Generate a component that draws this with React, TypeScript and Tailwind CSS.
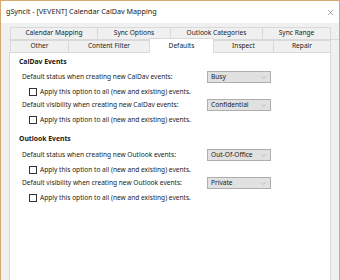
import { ChevronDown, X } from "lucide-react";

const font = { fontFamily: '"Noto Sans", "Open Sans", sans-serif' };

function Tab({ label, width, active }: { label: string; width: string; active?: boolean }) {
  return (
    <div
      className={`-ml-px flex items-center justify-center whitespace-nowrap border border-b-0 border-[#d9d9d9] text-[6.6px] leading-none text-[#1a1a1a] ${width} ${
        active ? "relative z-10 -mb-px -mt-[2px] bg-white" : "bg-[#f0f0f0]"
      }`}
    >
      {label}
    </div>
  );
}

function Select({ value }: { value: string }) {
  return (
    <div className="flex h-[12px] w-[64px] items-center justify-between border border-[#adadad] bg-[#e1e1e1] pl-[3px] pr-[3px] text-[6.6px] leading-none text-[#1a1a1a]">
      <span>{value}</span>
      <ChevronDown size={7} strokeWidth={1.2} className="text-[#777]" />
    </div>
  );
}

function OptionRow({ label, value, mt }: { label: string; value: string; mt: string }) {
  return (
    <>
      <div className={`flex h-[12px] items-center ${mt}`}>
        <span className="w-[197px] whitespace-nowrap pl-[12px] text-[6.6px] leading-none text-[#1a1a1a]">{label}</span>
        <Select value={value} />
      </div>
      <div className="mt-[4px] flex h-[10px] items-center pl-[19px]">
        <span className="h-[8px] w-[8px] border border-[#333] bg-white" />
        <span className="ml-[3px] whitespace-nowrap text-[6.6px] leading-none text-[#1a1a1a]">
          Apply this option to all (new and existing) events.
        </span>
      </div>
    </>
  );
}

export default function App() {
  return (
    <div
      className="flex h-[280px] w-[340px] flex-col overflow-hidden border border-b-0 border-[#d7a86e] bg-[#f0f0f0]"
      style={font}
    >
      <div className="flex h-[22px] shrink-0 items-center justify-between bg-white pl-[5px] pr-[4px]">
        <span className="text-[7.2px] leading-none text-[#1a1a1a]">gSyncit - [VEVENT] Calendar CalDav Mapping</span>
        <X size={9} strokeWidth={1} className="text-[#222]" />
      </div>

      <div className="mt-[4px] flex flex-1 flex-col pl-[8px]">
        <div className="flex h-[12px] pl-[2px]">
          <Tab label="Calendar Mapping" width="w-[88px]" />
          <Tab label="Sync Options" width="w-[74px]" />
          <Tab label="Outlook Categories" width="w-[93px]" />
          <Tab label="Sync Range" width="w-[69px]" />
        </div>
        <div className="flex h-[13px] border-t border-[#d9d9d9] pl-[2px]">
          <Tab label="Other" width="w-[59px]" />
          <Tab label="Content Filter" width="w-[82px]" />
          <Tab label="Defaults" width="w-[65px]" active />
          <Tab label="Inspect" width="w-[61px]" />
          <Tab label="Repair" width="w-[58px]" />
        </div>

        <div className="flex w-[322px] flex-1 flex-col border border-b-0 border-[#d9d9d9] bg-white pt-[4px]">
          <div className="flex h-[10px] items-center pl-[9px] text-[6.8px] font-bold leading-none text-[#1a1a1a]">
            CalDav Events
          </div>
          <OptionRow label="Default status when creating new CalDav events:" value="Busy" mt="mt-[4px]" />
          <OptionRow label="Default visibility when creating new CalDav events:" value="Confidential" mt="mt-[2px]" />
          <div className="mt-[9px] flex h-[10px] items-center pl-[9px] text-[6.8px] font-bold leading-none text-[#1a1a1a]">
            Outlook Events
          </div>
          <OptionRow label="Default status when creating new Outlook events:" value="Out-Of-Office" mt="mt-[5px]" />
          <OptionRow label="Default visibility when creating new Outlook events:" value="Private" mt="mt-[2px]" />
        </div>
      </div>
    </div>
  );
}
